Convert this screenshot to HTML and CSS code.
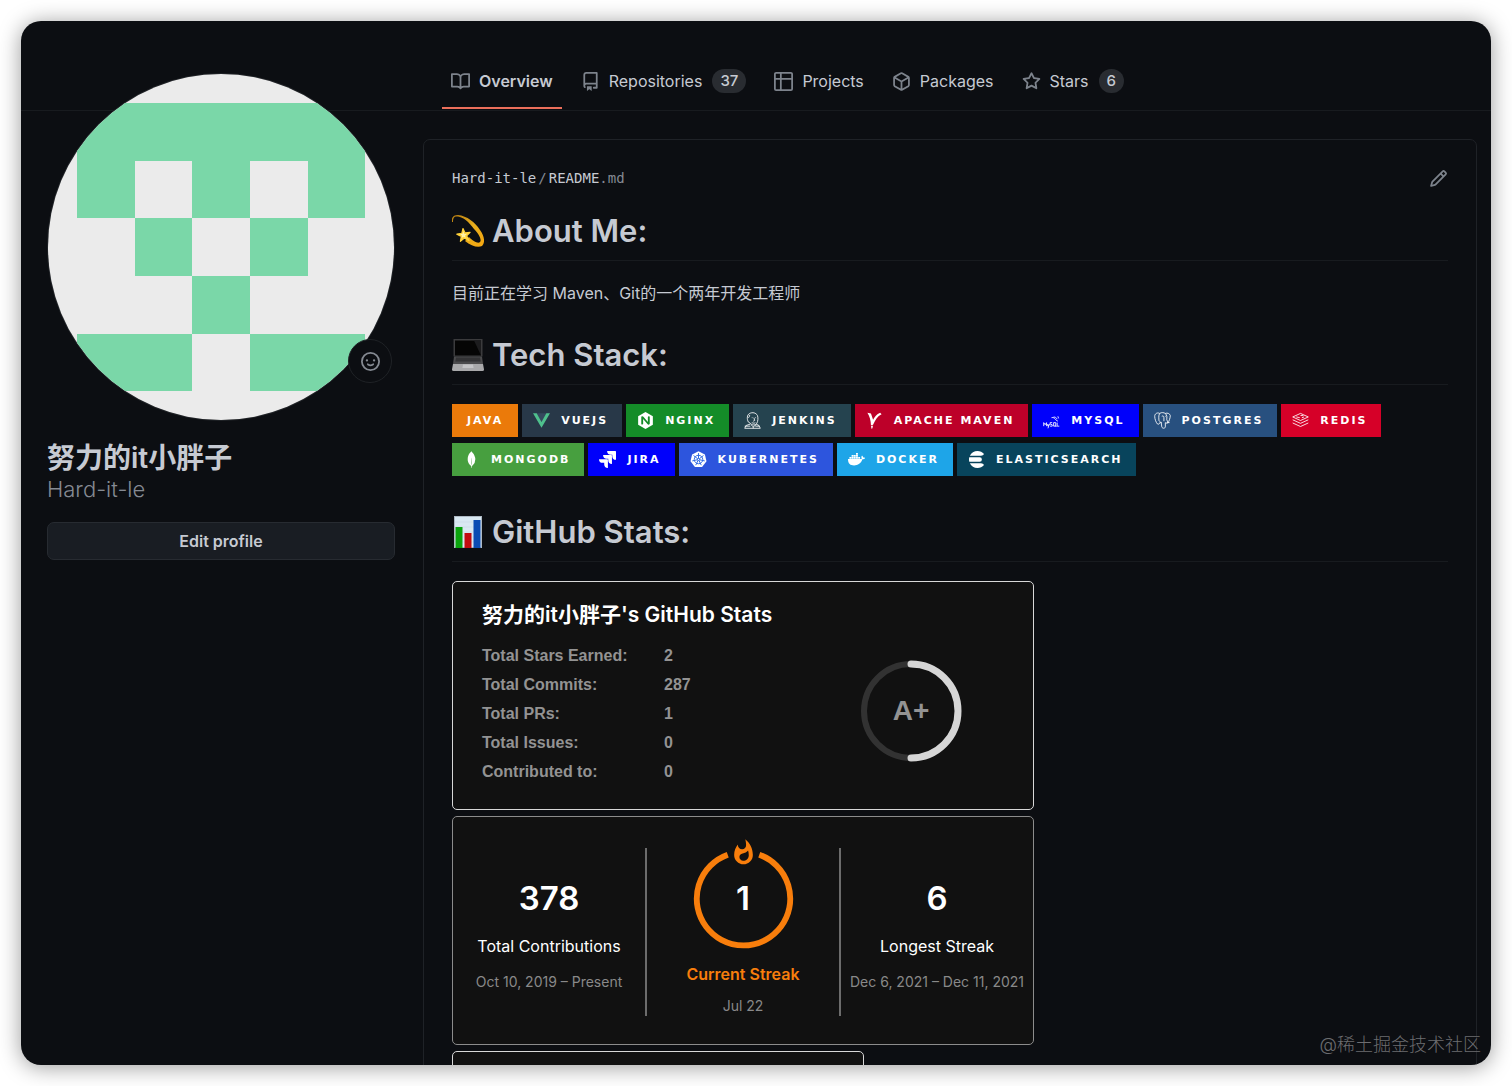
FILE: index.html
```html
<!DOCTYPE html>
<html lang="zh-CN">
<head>
  <meta charset="UTF-8" />
  <meta name="viewport" content="width=device-width, initial-scale=1" />
  <title>Hard-it-le</title>
  <link rel="stylesheet" href="styles.css">
</head>
<body>

<div class="window">
  <header class="topbar">
    <nav class="tabs">
      <a href="#" class="tab active">
        <svg class="octicon" viewBox="0 0 16 16"><path fill-rule="evenodd" d="M0 1.75A.75.75 0 01.75 1h4.253c1.227 0 2.317.59 3 1.501A3.744 3.744 0 0111.006 1h4.245a.75.75 0 01.75.75v10.5a.75.75 0 01-.75.75h-4.507a2.25 2.25 0 00-1.591.659l-.622.621a.75.75 0 01-1.06 0l-.622-.621A2.25 2.25 0 005.258 13H.75a.75.75 0 01-.75-.75V1.75zm8.755 3a2.25 2.25 0 012.25-2.25H14.5v9h-3.757c-.71 0-1.4.201-1.992.572l.004-7.322zm-1.504 7.324l.004-5.073-.002-2.253A2.25 2.25 0 005.003 2.5H1.5v9h3.757a3.75 3.75 0 011.994.574z"/></svg>
        Overview
      </a>
      <a href="#" class="tab">
        <svg class="octicon" viewBox="0 0 16 16"><path fill-rule="evenodd" d="M2 2.5A2.5 2.5 0 014.5 0h8.75a.75.75 0 01.75.75v12.5a.75.75 0 01-.75.75h-2.5a.75.75 0 110-1.5h1.75v-2h-8a1 1 0 00-.714 1.7.75.75 0 01-1.072 1.05A2.495 2.495 0 012 11.5v-9zm10.5-1V9h-8c-.356 0-.694.074-1 .208V2.5a1 1 0 011-1h8zM5 12.25v3.25a.25.25 0 00.4.2l1.45-1.087a.25.25 0 01.3 0L8.6 15.7a.25.25 0 00.4-.2v-3.25a.25.25 0 00-.25-.25h-3.5a.25.25 0 00-.25.25z"/></svg>
        Repositories <span class="counter">37</span>
      </a>
      <a href="#" class="tab">
        <svg class="octicon" viewBox="0 0 16 16"><path fill-rule="evenodd" d="M0 1.75C0 .784.784 0 1.75 0h12.5C15.216 0 16 .784 16 1.75v12.5A1.75 1.75 0 0114.25 16H1.75A1.75 1.75 0 010 14.25V1.75zM6.5 6.5v8h7.75a.25.25 0 00.25-.25V6.5h-8zm8-1.500V1.750a.25.25 0 00-.25-.25H6.500V5h8zM5 5V1.500H1.750a.25.25 0 00-.25.25V5H5zM1.500 6.500v7.750c0 .138.112.25.25.25H5v-8H1.500z"/></svg>
        Projects
      </a>
      <a href="#" class="tab">
        <svg class="octicon" viewBox="0 0 16 16"><path fill-rule="evenodd" d="M8.878.392a1.75 1.75 0 00-1.756 0l-5.25 3.045A1.75 1.75 0 001 4.951v6.098c0 .624.332 1.2.872 1.514l5.25 3.045a1.75 1.75 0 001.756 0l5.25-3.045c.54-.313.872-.89.872-1.514V4.951c0-.624-.332-1.2-.872-1.514L8.878.392zM7.875 1.690a.25.25 0 01.25 0l4.63 2.685L8 7.133 3.245 4.375l4.63-2.685zM2.500 5.677v5.372c0 .090.047.171.125.216l4.625 2.683V8.432L2.500 5.677zm6.250 8.271l4.625-2.683a.25.25 0 00.125-.216V5.677L8.750 8.432v5.516z"/></svg>
        Packages
      </a>
      <a href="#" class="tab">
        <svg class="octicon" viewBox="0 0 16 16"><path fill-rule="evenodd" d="M8 .25a.75.75 0 01.673.418l1.882 3.815 4.210.612a.75.75 0 01.416 1.279l-3.046 2.970.719 4.192a.75.75 0 01-1.088.791L8 12.347l-3.766 1.980a.75.75 0 01-1.088-.790l.720-4.194L.818 6.374a.75.75 0 01.416-1.280l4.210-.611L7.327.668A.75.75 0 018 .25zm0 2.445L6.615 5.500a.75.75 0 01-.564.410l-3.097.450 2.240 2.184a.75.75 0 01.216.664l-.528 3.084 2.769-1.456a.75.75 0 01.698 0l2.770 1.456-.530-3.084a.75.75 0 01.216-.664l2.240-2.183-3.096-.450a.75.75 0 01-.564-.410L8 2.694v.001z"/></svg>
        Stars <span class="counter">6</span>
      </a>
    </nav>
  </header>

  <main class="layout">
    <aside class="sidebar">
      <div class="avatar-wrap">
        <svg class="avatar" viewBox="0 0 12 12" shape-rendering="crispEdges">
          <rect width="12" height="12" fill="#ebebeb"/>
          <path fill="#7ad7a8" d="M1 1h10v4H9V3H7v2H5V3H3v2H1zM3 5h2v2H3zM7 5h2v2H7zM5 7h2v2H5zM1 9h4v2H1zM7 9h4v2H7z"/>
        </svg>
        <button class="status" aria-label="Set status">
          <svg viewBox="0 0 16 16"><path fill-rule="evenodd" d="M1.500 8a6.500 6.500 0 1113 0 6.500 6.500 0 01-13 0zM8 0a8 8 0 100 16A8 8 0 008 0zM5 8a1 1 0 100-2 1 1 0 000 2zm7-1a1 1 0 11-2 0 1 1 0 012 0zM5.320 9.636a.75.75 0 011.038.175l.007.009c.103.118.220.222.350.310.264.178.683.370 1.285.370.602 0 1.020-.192 1.285-.371.130-.088.247-.192.350-.310l.007-.008a.75.75 0 111.222.870l-.614-.431c.614.430.614.431.613.431v.001l-.001.002-.002.003-.005.007-.014.019a1.984 1.984 0 01-.184.213c-.160.166-.338.316-.530.445-.630.418-1.370.638-2.127.629-.946 0-1.652-.308-2.126-.630a3.320 3.320 0 01-.715-.657l-.014-.020-.005-.006-.002-.003v-.002h-.001l.613-.432-.614.430a.75.75 0 01.183-1.044z"/></svg>
        </button>
      </div>
      <h1 class="profile-name">努力的it小胖子</h1>
      <p class="profile-login">Hard-it-le</p>
      <button class="edit-profile">Edit profile</button>
    </aside>

    <article class="readme">
      <div class="readme-head">
        <div class="filename"><a href="#">Hard-it-le</a><span class="slash">/</span><a href="#">README<span class="muted">.md</span></a></div>
        <a href="#" class="pencil" aria-label="Edit README">
          <svg class="octicon" viewBox="0 0 16 16"><path fill-rule="evenodd" d="M11.013 1.427a1.750 1.750 0 012.474 0l1.086 1.086a1.750 1.750 0 010 2.474l-8.610 8.610c-.210.210-.470.364-.756.445l-3.251.930a.75.75 0 01-.927-.928l.929-3.250a1.750 1.750 0 01.445-.758l8.610-8.610zm1.414 1.060a.25.25 0 00-.354 0L10.811 3.750l1.439 1.440 1.263-1.263a.25.25 0 000-.354l-1.086-1.086zM11.189 6.250L9.750 4.810l-6.286 6.287a.25.25 0 00-.064.108l-.558 1.953 1.953-.558a.249.249 0 00.108-.064l6.286-6.286z"/></svg>
        </a>
      </div>

      <h2 class="heading">
        <svg class="emoji" viewBox="0 0 32 32">
          <defs><linearGradient id="dizzy" x1="0" y1="0" x2="1" y2="1"><stop offset="0" stop-color="#b47b10"/><stop offset=".5" stop-color="#e8ae1d"/><stop offset="1" stop-color="#f6a710"/></linearGradient></defs>
          <path fill="url(#dizzy)" d="M0 7C-1 2 2 0 6 0c9 1 17 7 22 15 5 7 5 13 2 16-4 2-11 0-17-5l4-4c4 4 9 7 11 5s-1-8-6-13C17 7 11 2 6 1.500 2 1 1 3 1 7z"/>
          <path fill="#ffd23a" stroke="#ffd23a" stroke-width="1.200" stroke-linejoin="round" d="M11 13.500l2.100 4.400 5-.600-3.500 3.600 2.400 4.500-4.600-2.300-4 3.200.9-4.900-4.500-2.200 5-.900z"/>
          <path fill="#fff3a8" d="M11.200 16l1.200 3 2.600-.3-2 2 .8 2-2.300-1-2 1.300.5-2.500-2-1.300 2.600-.5z"/>
        </svg>
        About Me:
      </h2>
      <p class="intro">目前正在学习 Maven、Git的一个两年开发工程师</p>

      <h2 class="heading">
        <svg class="emoji" viewBox="0 0 32 32">
          <path fill="#3b3b3d" d="M1.500 0h29v17.500h-29z"/>
          <path fill="#050505" d="M3 1.500h26v15H3z"/>
          <path fill="#1c1c1e" d="M22 1.500h7v15z"/>
          <path fill="#4b4b4d" d="M2 17.500h28l1 7.500H1z"/>
          <path fill="#333335" d="M4 18.500h24l.7 4H3.300z"/>
          <path fill="#a9a9ab" d="M1 25h30l1 5.500q0 1.500-1.500 1.500h-29Q0 32 0 30.500z"/>
          <path fill="#c4c4c6" d="M11 25.500h10l.6 3.500H10.400z"/>
        </svg>
        Tech Stack:
      </h2>
      <div class="badges">
        <span class="badge java">JAVA</span>
        <span class="badge vue"><svg viewBox="0 0 24 24"><path fill="#35495e" d="M4.500 1.600h15L12 14.500z"/><path fill="#4fc08d" d="M24 1.610h-5.160L12 14.080 5.160 1.610H0l12 20.780z"/></svg>VUEJS</span>
        <span class="badge nginx"><svg viewBox="0 0 24 24"><path d="M12 0L1.605 6v12L12 24l10.395-6V6L12 0zm6 16.590c0 .705-.646 1.290-1.529 1.290-.631 0-1.351-.255-1.801-.810l-6-7.141v6.660c0 .721-.570 1.290-1.274 1.290H7.320c-.721 0-1.290-.600-1.290-1.290V7.410c0-.705.630-1.290 1.500-1.290.646 0 1.380.255 1.830.810l5.970 7.141V7.410c0-.721.600-1.290 1.290-1.290h.075c.720 0 1.290.600 1.290 1.290v9.180H18z"/></svg>NGINX</span>
        <span class="badge jenkins"><svg class="line-icon" viewBox="0 0 24 24"><path d="M6 14C4 10 4 4 8 2c4-2 9-1 11 3 1 3 1 8-1 11-2 3-7 3-9 0M6 8c1 0 2-2 2-4M6 14l3 2M11 8h1M16 8h1M14 8l1 4-2 1M11 15c2 1 4 1 5 0M9 17l-6 2-2 4h22l-2-4-4-2M10 18l3 3 4-3M13 21v2M1 20h8M16 20h6"/></svg>JENKINS</span>
        <span class="badge maven"><svg viewBox="0 0 24 24"><path d="M2 1l5 1 3 9c2-4 5-8 10-10l2 2c-6 3-9 8-12 15l-3 1C7 12 5 6 2 1zM7 20l3-1-1 4-1 1z"/></svg>APACHE MAVEN</span>
        <span class="badge mysql"><svg class="line-icon" viewBox="0 0 24 24"><path stroke-width="1" d="M1 20v-5l2 3 2-3v5M6 17l1 3 2-3-2 6M13 15h-3v2l3 1v2h-3M15 15v5h3v-5zM17 19l2 2M20 15v5h3M12 8c3-1 5 1 6 3l3 2M15 7c2 0 4 1 5 3M22 9l-1-3"/></svg>MYSQL</span>
        <span class="badge postgres"><svg class="line-icon" viewBox="0 0 24 24"><path d="M8 2C4 0 1 3 1 6c0 4 2 9 4 11 2 1 3-1 4-3M8 2c3-2 6-1 8 0 3-1 6 0 7 3 0 4-2 8-3 10M8 2C6 5 7 10 7 12c1 2 3 2 3 4M16 2c3 3 2 6 2 9l2 4c-2 1-3 1-4 0v6c0 2-4 3-5 0l-1-7M11 6c2-1 3 0 3 2v5M17 6h-1M18 15l4 0"/></svg>POSTGRES</span>
        <span class="badge redis"><svg class="line-icon" viewBox="0 0 24 24"><path stroke-width="2" d="M1 7l11-5 11 5-11 5zM1 11l11 5 11-5M1 15.500l11 5 11-5M6 7l5 1M12 5h4M14 8l3-1"/></svg>REDIS</span>
        <span class="badge mongodb"><svg viewBox="0 0 24 24"><path d="M17.193 9.555c-1.264-5.580-4.252-7.414-4.573-8.115-.280-.394-.530-.954-.735-1.440-.036.495-.055.685-.523 1.184-.723.566-4.438 3.682-4.740 10.020-.282 5.912 4.270 9.435 4.888 9.884l.070.050A73.490 73.490 0 0111.910 24h.481c.114-1.032.284-2.056.510-3.070.417-.296.604-.463.850-.693a11.342 11.342 0 003.639-8.464c.010-.814-.103-1.662-.197-2.218zm-5.336 8.195s0-8.291.275-8.290c.213 0 .490 10.695.490 10.695-.381-.045-.765-1.760-.765-2.405z"/></svg>MONGODB</span>
        <span class="badge jira"><svg viewBox="0 0 24 24"><path d="M11.571 11.513H0a5.218 5.218 0 0 0 5.232 5.215h2.130v2.057A5.215 5.215 0 0 0 12.575 24V12.518a1.005 1.005 0 0 0-1.005-1.005zm5.723-5.756H5.736a5.215 5.215 0 0 0 5.215 5.214h2.129v2.058a5.218 5.218 0 0 0 5.215 5.214V6.758a1.001 1.001 0 0 0-1.001-1.001zM23.013 0H11.455a5.215 5.215 0 0 0 5.215 5.215h2.129v2.057A5.215 5.215 0 0 0 24 12.483V1.005A1.001 1.001 0 0 0 23.013 0z"/></svg>JIRA</span>
        <span class="badge kubernetes"><svg viewBox="0 0 24 24"><path d="M12 .5l9 4.300 2.300 9.700-6.300 8H7l-6.300-8L3 4.800z"/><g fill="none" stroke="#326ce5" stroke-width="1.400"><circle cx="12" cy="12" r="6"/><circle cx="12" cy="12" r="1.500"/><path d="M12 3v7.500M19 6.400l-6 4.700M20.800 14l-7.400-1.700M15.900 20l-3.200-6.700M8.100 20l3.200-6.700M3.200 14l7.400-1.700M5 6.400l6 4.700"/></g></svg>KUBERNETES</span>
        <span class="badge docker"><svg viewBox="0 0 24 24"><path d="M2 8.500h2.700v2.500H2zM5.100 8.500h2.700v2.500H5.100zM8.200 8.500h2.700v2.500H8.200zM11.300 8.500H14v2.500h-2.700zM5.100 5.600h2.700v2.500H5.100zM8.200 5.600h2.700v2.500H8.200zM11.300 5.600H14v2.500h-2.700zM11.300 2.700H14v2.500h-2.700zM14.400 8.500h2.700v2.500h-2.700zM0 11.400h17.500c.9 0 1.500-.2 2-.5-.9-1.300-.8-3.200.3-4.400 1 .8 1.600 1.700 1.700 2.800 1-.2 1.900 0 2.500.500-.5 1.400-2 2-3.700 2C18.500 17.500 14 20.500 8.500 20.500 3 20.500-.2 17.500 0 11.400z"/></svg>DOCKER</span>
        <span class="badge elastic"><svg viewBox="0 0 24 24"><path d="M13.394 0C8.683 0 4.609 2.716 2.644 6.667h15.641a4.770 4.770 0 0 0 3.073-1.110c.446-.375.864-.785 1.247-1.243A11.974 11.974 0 0 0 13.394 0zM1.804 8.889a12.009 12.009 0 0 0 0 6.222h14.700a3.111 3.111 0 1 0 0-6.222zm.840 8.444C4.610 21.283 8.684 24 13.395 24c3.701 0 7.011-1.677 9.212-4.312a9.958 9.958 0 0 0-1.249-1.243 4.770 4.770 0 0 0-3.073-1.110z"/></svg>ELASTICSEARCH</span>
      </div>

      <h2 class="heading spaced">
        <svg class="emoji" viewBox="0 0 32 32">
          <path fill="#aeb9c4" d="M2 0h28v32H2z"/>
          <path fill="#d9e8f2" d="M3 1h26v30H3z"/>
          <path stroke="#c6d6e1" stroke-width=".5" d="M3 6h26M3 11h26M3 16h26M3 21h26M3 26h26"/>
          <path fill="#0aa30d" d="M3.500 11h7v21h-7z"/>
          <path fill="#c20a0f" d="M12.500 17h7v15h-7z"/>
          <path fill="#0b4bb3" d="M21.500 4h7v28h-7z"/>
        </svg>
        GitHub Stats:
      </h2>

      <div class="cards">
        <section class="card stats">
          <div class="stats-text">
            <h3>努力的it小胖子's GitHub Stats</h3>
            <table>
              <tr><th scope="row">Total Stars Earned:</th><td>2</td></tr>
              <tr><th scope="row">Total Commits:</th><td>287</td></tr>
              <tr><th scope="row">Total PRs:</th><td>1</td></tr>
              <tr><th scope="row">Total Issues:</th><td>0</td></tr>
              <tr><th scope="row">Contributed to:</th><td>0</td></tr>
            </table>
          </div>
          <div class="rank">
            <svg viewBox="0 0 102 102">
              <circle cx="51" cy="51" r="47" fill="none" stroke="#323232" stroke-width="6"/>
              <path d="M51 4a47 47 0 0 1 0 94" fill="none" stroke="#d6d6d6" stroke-width="7" stroke-linecap="round"/>
            </svg>
            <span>A+</span>
          </div>
        </section>

        <section class="card streak">
          <div class="streak-col">
            <strong>378</strong>
            <p class="label">Total Contributions</p>
            <p class="date">Oct 10, 2019 – Present</p>
          </div>
          <div class="divider"></div>
          <div class="streak-col current">
            <div class="ring">
              <svg viewBox="-43 19 86 95">
                <path d="M13.500 33.300a40 40 0 1 1-27 0" fill="none" stroke="#f87e0c" stroke-width="5"/>
                <path transform="translate(0 19.500)" fill="#f87e0c" fill-rule="evenodd" d="M1.500.67S2.240 3.320 2.240 5.470C2.240 7.530.89 9.200-1.170 9.200-3.230 9.200-4.790 7.530-4.790 5.470L-4.760 5.110C-6.780 7.510-8 10.620-8 13.990-8 18.410-4.420 22 0 22 4.420 22 8 18.410 8 13.990 8 8.600 5.410 3.790 1.500.67zM-.29 19C-2.070 19-3.510 17.600-3.510 15.860-3.510 14.240-2.460 13.100-.7 12.740 1.070 12.380 2.900 11.530 3.920 10.160 4.310 11.450 4.510 12.810 4.510 14.200 4.510 16.850 2.360 19-.29 19z"/>
              </svg>
              <strong>1</strong>
            </div>
            <p class="label">Current Streak</p>
            <p class="date">Jul 22</p>
          </div>
          <div class="divider"></div>
          <div class="streak-col">
            <strong>6</strong>
            <p class="label">Longest Streak</p>
            <p class="date">Dec 6, 2021 – Dec 11, 2021</p>
          </div>
        </section>

        <section class="card languages"></section>
      </div>
    </article>
  </main>

  <div class="watermark">@稀土掘金技术社区</div>
</div>

</body>
</html>
```
FILE: styles.css
```css
* {
  box-sizing: border-box;
}

body {
  margin: 0;
  padding: 21px;
  height: 100vh;
  background: #fff;
  color: #c6cad2;
  font-family: Inter, "Noto Sans CJK SC", sans-serif;
  font-size: 16px;
}

h1, h2, h3, p {
  margin: 0;
}

a {
  color: inherit;
  text-decoration: none;
}

button {
  font-family: inherit;
  cursor: pointer;
}

svg {
  display: block;
  fill: currentColor;
}

.window {
  position: relative;
  height: 100%;
  overflow: hidden;
  background: #0c0e12;
  border-radius: 20px;
  box-shadow: 0 2px 22px rgba(0, 0, 0, 0.4);
}

/* tabs */

.topbar {
  height: 90px;
  padding-left: 421px;
  border-bottom: 1px solid #181b1f;
}

.tabs {
  display: flex;
  gap: 10px;
  height: 88px;
}

.tab {
  display: flex;
  align-items: center;
  gap: 9px;
  padding: 34px 9px 0;
  border-bottom: 2px solid transparent;
}

.tab.active {
  font-weight: 600;
  border-bottom-color: #ec6f5b;
}

.octicon {
  width: 19px;
  height: 19px;
  color: #7d838c;
}

.counter {
  margin-left: 1px;
  padding: 0 8px;
  line-height: 24px;
  border-radius: 12px;
  background: #292c31;
  font-size: 15px;
  font-weight: 500;
}

/* layout */

.layout {
  display: grid;
  grid-template-columns: 348px 1fr;
  gap: 28px;
  padding: 0 14px 0 26px;
}

.sidebar {
  margin-top: -38px;
}

.avatar-wrap {
  position: relative;
}

.avatar {
  width: 100%;
  border: 1px solid #202327;
  border-radius: 50%;
}

.status {
  position: absolute;
  right: 3px;
  bottom: 38px;
  display: grid;
  place-items: center;
  width: 44px;
  height: 44px;
  padding: 0;
  color: #858a92;
  background: #0c0e12;
  border: 1px solid #1f2226;
  border-radius: 50%;
}

.status svg {
  width: 19px;
  height: 19px;
}

.profile-name {
  margin-top: 20px;
  font-size: 28px;
  line-height: 34px;
  font-weight: 600;
}

.profile-login {
  font-size: 22px;
  line-height: 28px;
  font-weight: 300;
  color: #858a93;
}

.edit-profile {
  width: 100%;
  height: 38px;
  margin-top: 19px;
  color: #c6cad2;
  background: #191d23;
  border: 1px solid #272b31;
  border-radius: 7px;
  font-size: 16px;
  font-weight: 600;
}

/* readme */

.readme {
  margin-top: 28px;
  padding: 28px;
  border: 1px solid #1f2227;
  border-radius: 7px;
}

.readme-head {
  display: flex;
  justify-content: space-between;
  align-items: center;
  height: 20px;
}

.filename {
  font-family: "DejaVu Sans Mono", monospace;
  font-size: 14px;
}

.slash {
  margin: 0 2px;
  color: #858a93;
}

.muted {
  color: #858a93;
}

.heading {
  display: flex;
  align-items: center;
  gap: 8px;
  margin-top: 29px;
  padding-bottom: 9px;
  border-bottom: 1px solid #181b1f;
  font-size: 31px;
  line-height: 40px;
  font-weight: 600;
}

.readme-head + .heading {
  margin-top: 23px;
}

.heading.spaced {
  margin-top: 36px;
}

.emoji {
  width: 32px;
  height: 32px;
}

.intro {
  margin-top: 19px;
  line-height: 26px;
}

/* badges */

.badges {
  display: flex;
  flex-wrap: wrap;
  gap: 6px 4px;
  margin-top: 19px;
}

.badge {
  display: flex;
  align-items: center;
  gap: 11px;
  height: 33px;
  padding: 0 14px 0 11px;
  color: #fff;
  font-family: "DejaVu Sans", sans-serif;
  font-size: 11px;
  font-weight: bold;
  letter-spacing: 2px;
}

.badge svg {
  width: 17px;
  height: 17px;
}

.line-icon path {
  fill: none;
  stroke: #fff;
  stroke-width: 1.2;
}

.java { padding: 0 15px; background: #eb7a0a; }
.vue { background: #283848; }
.nginx { background: #148c28; }
.jenkins { background: #25434f; }
.maven { background: #bd0029; }
.mysql { background: #0000fb; }
.postgres { background: #28507f; }
.redis { background: #d60028; }
.mongodb { background: #479f3f; }
.jira { background: #0000fb; }
.kubernetes { background: #2d55dd; }
.docker { background: #1ea5e8; }
.elastic { background: #08445c; }

/* cards */

.cards {
  display: flex;
  flex-direction: column;
  gap: 6px;
  margin-top: 19px;
}

.card {
  width: 100%;
  max-width: 582px;
  height: 229px;
  background: #111;
  border: 1px solid #d8d8d8;
  border-radius: 5px;
}

.stats {
  display: flex;
  justify-content: space-between;
  align-items: center;
  padding: 0 71px 4px 29px;
}

.stats h3 {
  margin-bottom: 12px;
  color: #fff;
  font-size: 21px;
  line-height: 28px;
  font-weight: 600;
}

.stats table {
  border-collapse: collapse;
  color: #939393;
  font-family: "Liberation Sans", sans-serif;
  font-size: 16px;
  line-height: 29px;
  font-weight: bold;
}

.stats th, .stats td {
  padding: 0;
  text-align: left;
}

.stats th {
  width: 182px;
}

.rank {
  display: grid;
  place-items: center;
  margin-top: 34px;
  color: #939393;
  font-family: "Liberation Sans", sans-serif;
  font-size: 28px;
  font-weight: bold;
}

.rank > * {
  grid-area: 1 / 1;
}

.rank svg {
  width: 102px;
  height: 102px;
}

.streak {
  display: grid;
  grid-template-columns: 1fr 2px 1fr 2px 1fr;
  border-color: #8c8c8c;
  text-align: center;
}

.streak-col {
  padding-top: 61px;
  white-space: nowrap;
}

.streak-col strong {
  color: #fff;
  font-size: 33px;
  line-height: 40px;
  font-weight: 600;
}

.streak-col.current {
  padding-top: 21px;
}

.divider {
  margin: 31px 0 28px;
  background: #6c6c6c;
}

.ring {
  display: grid;
  justify-items: center;
  align-items: end;
}

.ring > * {
  grid-area: 1 / 1;
}

.ring svg {
  width: 101px;
  height: 111px;
}

.ring strong {
  padding-bottom: 31px;
}

.label {
  margin-top: 16px;
  color: #fff;
  font-size: 16px;
  line-height: 24px;
}

.date {
  margin-top: 14px;
  color: #898989;
  font-size: 14px;
  line-height: 20px;
}

.current .label {
  margin-top: 13px;
  color: #f87e0c;
  font-weight: 600;
}

.current .date {
  margin-top: 10px;
}

.languages {
  height: 200px;
  max-width: 412px;
}

.watermark {
  position: absolute;
  right: 10px;
  bottom: 8px;
  color: #6c6d70;
  font-size: 18px;
  line-height: 24px;
  font-weight: 300;
}
```
